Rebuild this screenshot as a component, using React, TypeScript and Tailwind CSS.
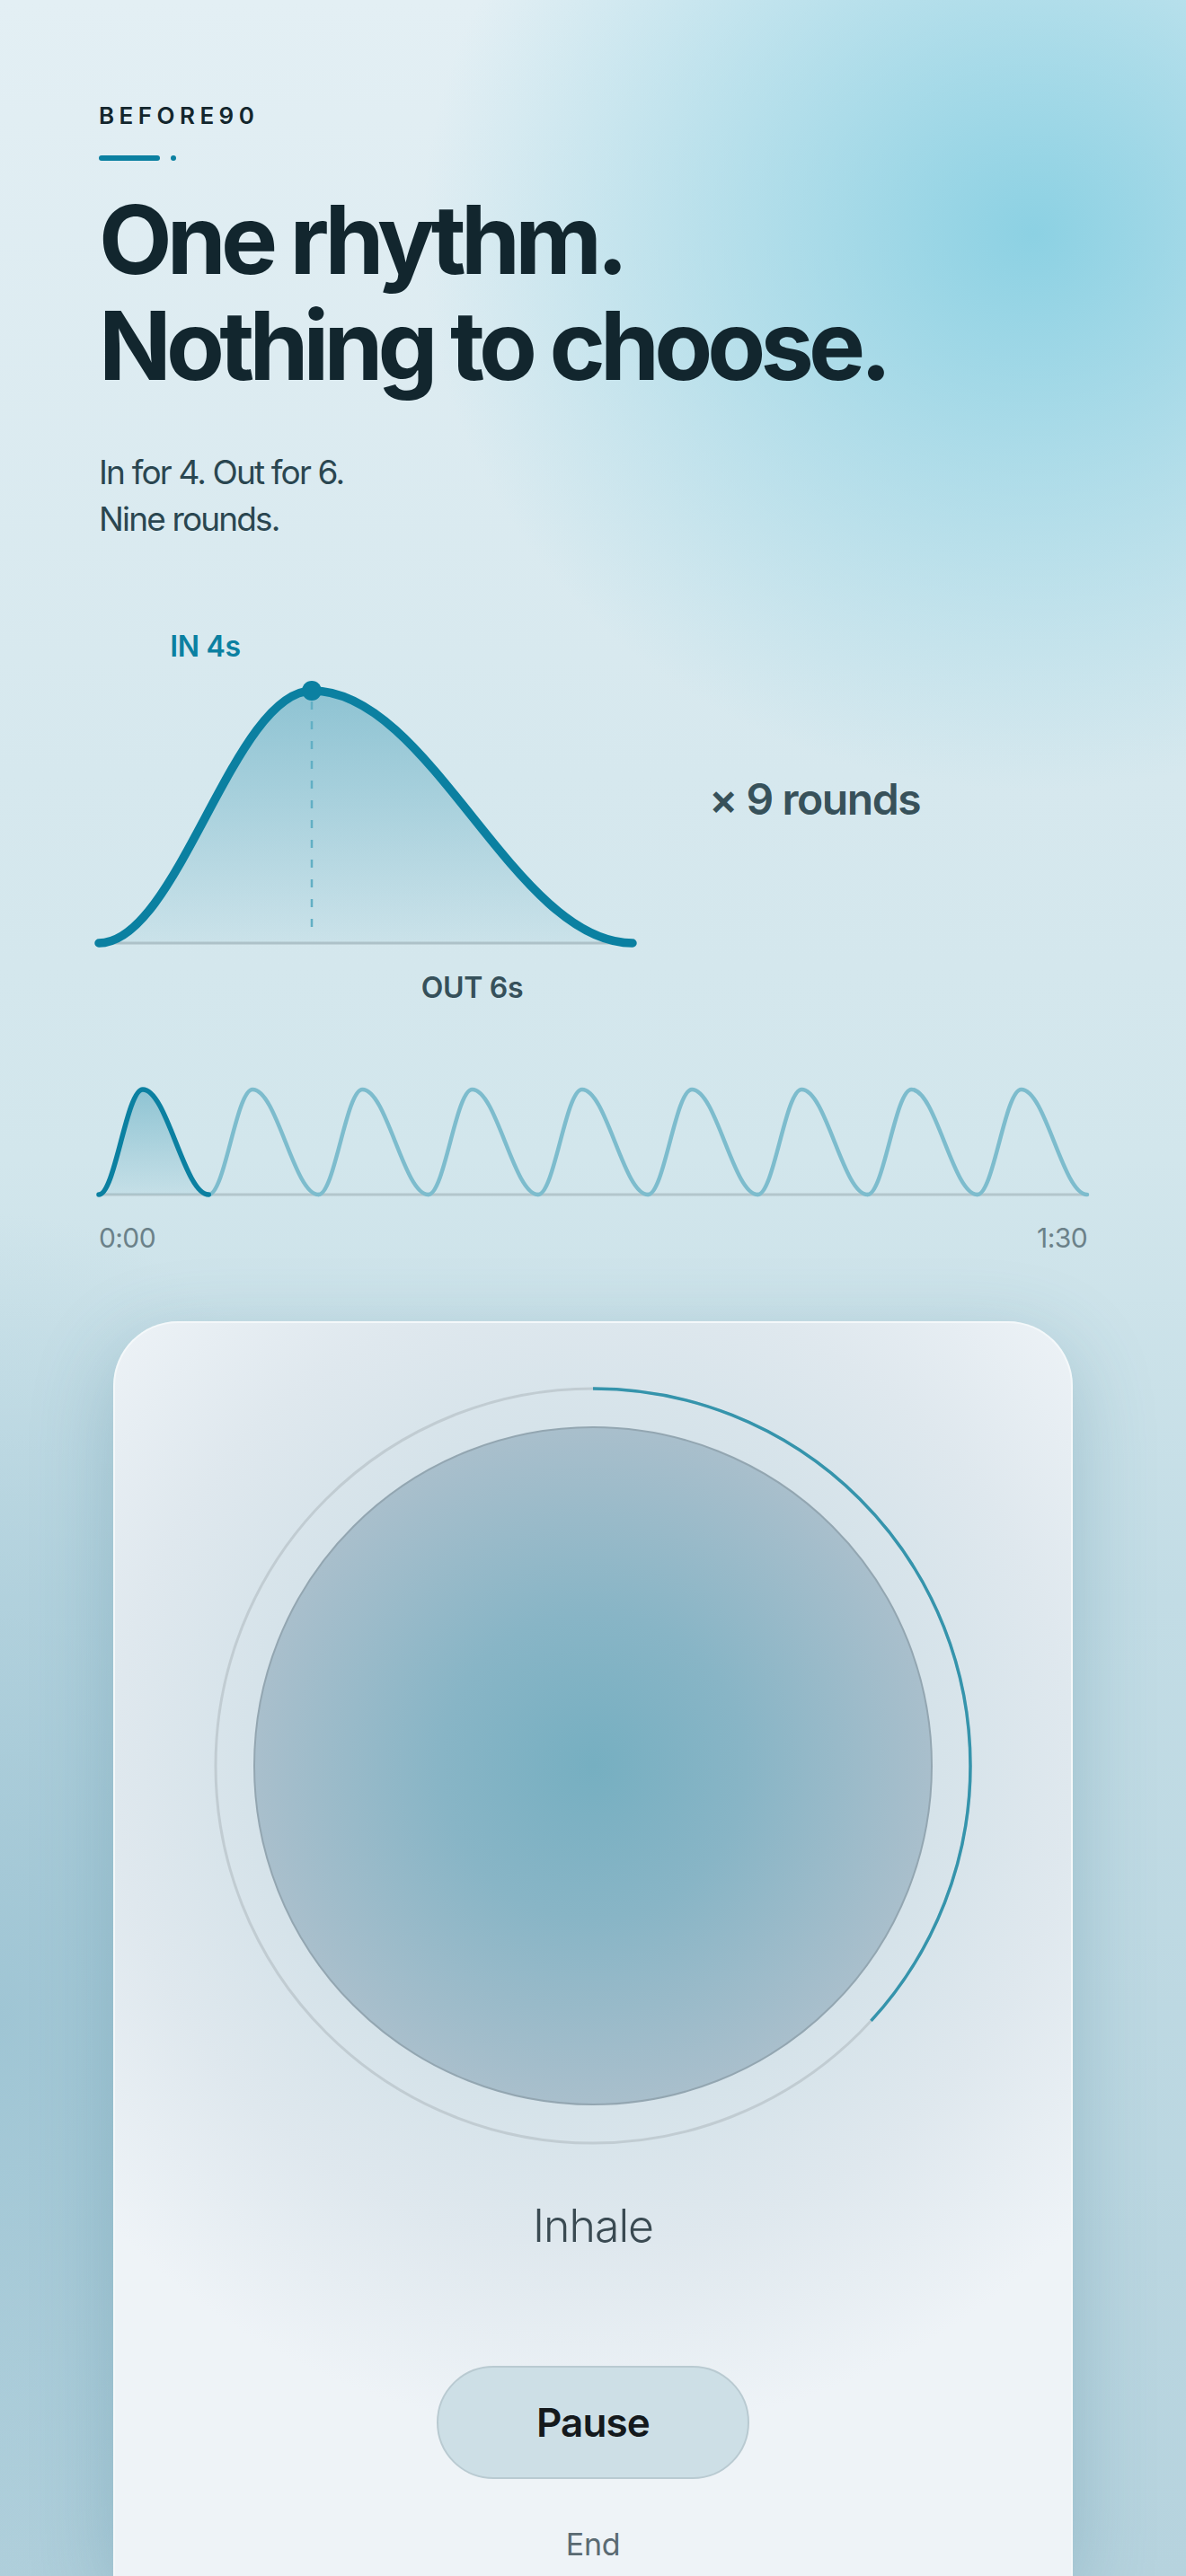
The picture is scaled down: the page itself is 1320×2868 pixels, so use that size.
import React from 'react'

const teal = '#0b80a1'

// half-cosine rise then fall, drawn as two eased cubics
function breathPath(x0: number, w: number, base: number, peak: number, rise = 0.4) {
  const xr = x0 + w * rise
  const x1 = x0 + w
  const a = w * rise * 0.37
  const b = w * (1 - rise) * 0.37
  return `M${x0},${base} C${x0 + a},${base} ${xr - a},${peak} ${xr},${peak} C${xr + b},${peak} ${x1 - b},${base} ${x1},${base}`
}

function BreathCurve() {
  const d = breathPath(0, 594, 295, 14)
  return (
    <svg className="mt-[19px] overflow-visible" width={594} height={300} viewBox="0 0 594 300">
      <defs>
        <linearGradient id="curveFill" x1="0" y1="0" x2="0" y2="1">
          <stop offset="0%" stopColor={teal} stopOpacity={0.36} />
          <stop offset="100%" stopColor={teal} stopOpacity={0.05} />
        </linearGradient>
      </defs>
      <path d={`${d} Z`} fill="url(#curveFill)" />
      <line x1={0} y1={295} x2={594} y2={295} stroke="#adc1c8" strokeWidth={3} />
      <line x1={237} y1={26} x2={237} y2={290} stroke="#62afc4" strokeWidth={2.5} strokeDasharray="9 13" />
      <path d={d} fill="none" stroke={teal} strokeWidth={9.5} strokeLinecap="round" strokeLinejoin="round" />
      <circle cx={237} cy={14} r={11} fill={teal} />
    </svg>
  )
}

function RoundsStrip() {
  const w = 1100
  const p = w / 9
  return (
    <svg className="mt-[89px] overflow-visible" width={w} height={130} viewBox={`0 0 ${w} 130`}>
      <defs>
        <linearGradient id="stripFill" x1="0" y1="0" x2="0" y2="1">
          <stop offset="0%" stopColor={teal} stopOpacity={0.34} />
          <stop offset="100%" stopColor={teal} stopOpacity={0.06} />
        </linearGradient>
      </defs>
      <line x1={0} y1={125} x2={w} y2={125} stroke="#b3c6cc" strokeWidth={3} />
      {Array.from({ length: 9 }).map((_, i) =>
        i === 0 ? null : (
          <path
            key={i}
            d={breathPath(i * p, p, 125, 8)}
            fill="none"
            stroke="#7dbccd"
            strokeWidth={4.5}
            strokeLinecap="round"
          />
        )
      )}
      <path d={`${breathPath(0, p, 125, 8)} Z`} fill="url(#stripFill)" />
      <path d={breathPath(0, p, 125, 8)} fill="none" stroke={teal} strokeWidth={5.5} strokeLinecap="round" />
    </svg>
  )
}

function Orb() {
  const c = 422
  const r = 420
  const circ = 2 * Math.PI * r
  const progress = 132.5 / 360
  return (
    <svg width={844} height={844} viewBox="0 0 844 844" className="overflow-visible">
      <defs>
        <radialGradient id="orbFill" cx="50%" cy="50%" r="50%">
          <stop offset="0%" stopColor="#76afc1" />
          <stop offset="45%" stopColor="#88b5c6" />
          <stop offset="100%" stopColor="#a9bfcc" />
        </radialGradient>
      </defs>
      <circle cx={c} cy={c} r={r} fill="none" stroke="#c1ccd2" strokeWidth={3} />
      <circle
        cx={c}
        cy={c}
        r={r}
        fill="none"
        stroke="#3594ac"
        strokeWidth={3.5}
        strokeDasharray={`${circ * progress} ${circ}`}
        transform={`rotate(-90 ${c} ${c})`}
      />
      <circle cx={c} cy={c} r={377} fill="url(#orbFill)" stroke="#93a6b1" strokeWidth={2} />
    </svg>
  )
}

export default function App() {
  return (
    <div className="h-[2868px] w-full overflow-hidden font-['Inter','Noto_Sans',sans-serif] bg-[radial-gradient(ellipse_680px_620px_at_1150px_260px,#8cd1e3_0%,rgba(140,209,227,0.55)_45%,rgba(140,209,227,0)_100%),radial-gradient(ellipse_520px_900px_at_0px_2250px,#9fc5d4_0%,rgba(159,197,212,0)_100%),linear-gradient(180deg,#e3eff4_0%,#d6e8ee_30%,#d2e6ec_45%,#c2dce5_62%,#b6d3de_100%)]">
      <div className="px-[110px] pt-[116px]">
        <p className="text-[26px] leading-none font-semibold tracking-[0.21em] text-[#13262d]">BEFORE90</p>
        <div className="mt-[31px] flex items-center gap-[12px]">
          <span className="h-[6px] w-[68px] rounded-full bg-[#0b80a1]" />
          <span className="h-[6px] w-[6px] rounded-full bg-[#0b80a1]" />
        </div>

        <h1 className="mt-[29px] text-[106px] leading-[118px] font-bold tracking-[-0.055em] text-[#12262e]">
          One rhythm.
          <br />
          Nothing to choose.
        </h1>

        <p className="mt-[56px] text-[37px] leading-[52px] tracking-[-0.05em] text-[#2a4650]">
          In for 4. Out for 6.
          <br />
          Nine rounds.
        </p>

        {/* ── one breath ── */}
        <div className="mt-[100px] flex items-start">
          <div className="flex w-[594px] flex-col">
            <span className="w-[237px] text-center text-[32px] leading-none font-semibold tracking-[-0.01em] text-[#0b80a1]">
              IN 4s
            </span>
            <BreathCurve />
            <span className="mt-[29px] ml-[237px] w-[357px] text-center text-[32px] leading-none font-semibold tracking-[-0.01em] text-[#36505a]">
              OUT 6s
            </span>
          </div>
          <p className="mt-[162px] ml-[85px] text-[48px] leading-none font-semibold tracking-[-0.03em] text-[#37515a]">
            × 9 rounds
          </p>
        </div>

        {/* ── all nine rounds ── */}
        <RoundsStrip />
        <div className="mt-[28px] flex justify-between text-[30px] leading-none tracking-[-0.02em] text-[#6b8189]">
          <span>0:00</span>
          <span>1:30</span>
        </div>

        {/* ── session card ── */}
        <div className="mx-[16px] mt-[78px] flex flex-col items-center rounded-t-[72px] border-x-2 border-t-2 border-[#f4f8fa] bg-[radial-gradient(circle_740px_at_50%_495px,#c9dce5_0%,#d4e2e9_48%,#dfe8ee_72%,#eef3f7_100%)] px-0 pt-[71px] pb-[18px] shadow-[0_24px_90px_rgba(50,110,135,0.28)]">
          <Orb />
          <p className="mt-[65px] text-[50px] leading-none font-light tracking-[-0.02em] text-[#3a4a52]">Inhale</p>
          <button className="mt-[131px] flex h-[126px] w-[348px] items-center justify-center rounded-full border-2 border-[#b9cad1] bg-[#cddfe6] text-[44px] font-semibold tracking-[-0.02em] text-[#14191c]">
            Pause
          </button>
          <p className="mt-[56px] text-[34px] leading-none tracking-[-0.01em] text-[#5a6a72]">End</p>
        </div>
      </div>
    </div>
  )
}
